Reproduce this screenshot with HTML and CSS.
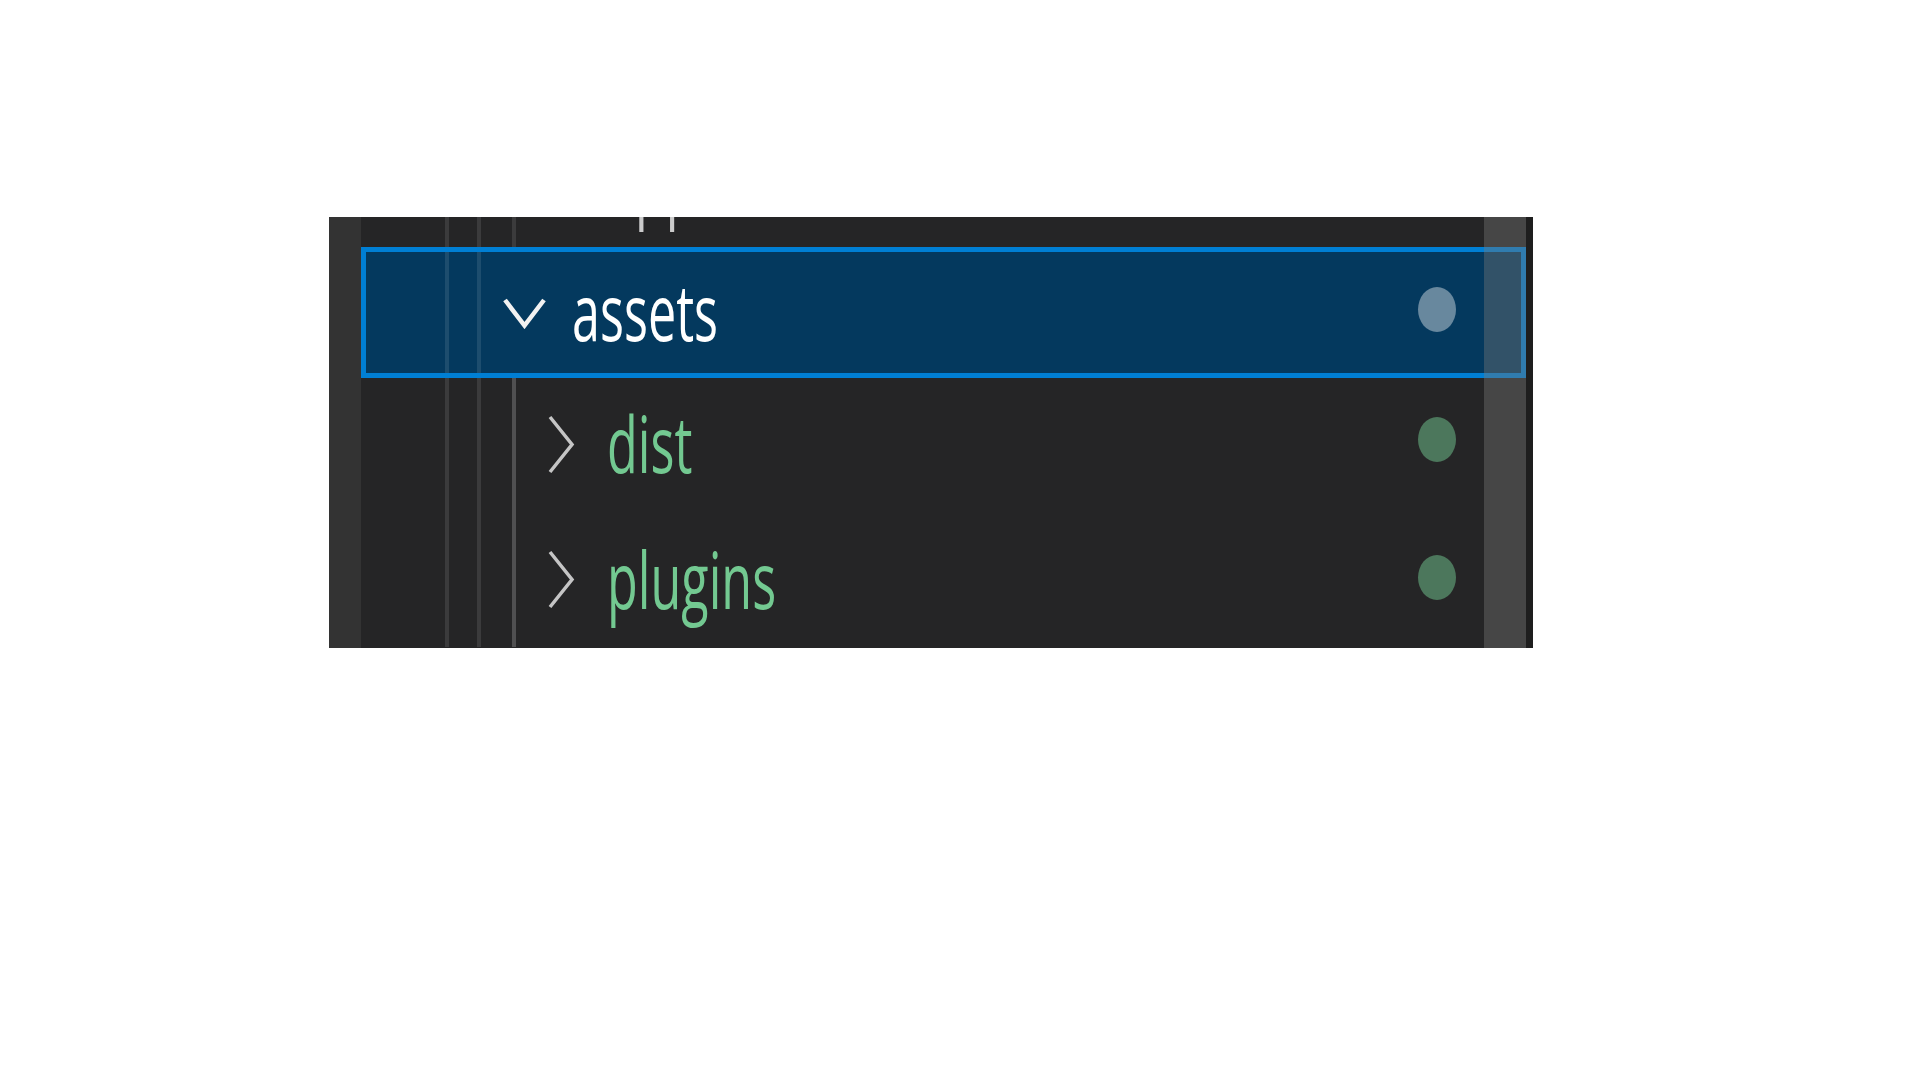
FILE: index.html
```html
<!DOCTYPE html>
<html lang="en">
<head>
<meta charset="utf-8">
<title>Explorer</title>
<link rel="stylesheet" href="styles.css">
</head>
<body>
<div class="panel">
  <div class="left-strip"></div>
  <div class="tree">
    <div class="list">
      <div class="row row-top">
        <span class="g g1"></span><span class="g g2"></span><span class="g g3"></span>
        <span class="twistie"></span>
        <span class="label label-plain">app</span>
      </div>
      <div class="row row-selected">
        <span class="g g1"></span><span class="g g2"></span>
        <span class="twistie">
          <svg width="45" height="32" viewBox="0 0 45 32"><polyline points="3,3 22.5,28.5 42,3" fill="none" stroke="#f2f2f2" stroke-width="4.5" stroke-linejoin="miter"/></svg>
        </span>
        <span class="label label-selected">assets</span>
        <span class="dot dot-selected"></span>
      </div>
      <div class="row row-dist">
        <span class="g g1"></span><span class="g g2"></span><span class="g g3 g-active"></span>
        <span class="twistie">
          <svg width="28" height="61" viewBox="0 0 28 61"><polyline points="3,3 25,30.5 3,58" fill="none" stroke="#c5c5c5" stroke-width="3.5"/></svg>
        </span>
        <span class="label label-green">dist</span>
        <span class="dot dot-green"></span>
      </div>
      <div class="row row-plugins">
        <span class="g g1"></span><span class="g g2"></span><span class="g g3 g-active"></span>
        <span class="twistie">
          <svg width="28" height="61" viewBox="0 0 28 61"><polyline points="3,3 25,30.5 3,58" fill="none" stroke="#c5c5c5" stroke-width="3.5"/></svg>
        </span>
        <span class="label label-green">plugins</span>
        <span class="dot dot-green"></span>
      </div>
    </div>
    <div class="scrollbar"></div>
  </div>
  <div class="right-strip"></div>
</div>
</body>
</html>
```

FILE: styles.css
```css
html, body {
  margin: 0;
  padding: 0;
  background: #ffffff;
}

.panel {
  margin: 217px 0 0 329px;
  width: 1204px;
  height: 431px;
  display: flex;
  background: #252526;
}

.left-strip {
  width: 32px;
  flex: 0 0 32px;
  background: #333333;
}

.right-strip {
  width: 7px;
  flex: 0 0 7px;
  background: #1e1e1e;
}

.tree {
  flex: 1 1 auto;
  position: relative;
  overflow: hidden;
  background: #252526;
}

.list {
  margin-top: -101px;
  display: flex;
  flex-direction: column;
}

.row {
  display: flex;
  align-items: stretch;
  height: 131px;
  flex: 0 0 auto;
}

.row-selected {
  height: 131px;
  background: #04395e;
  outline: 5px solid #007fd4;
  outline-offset: -5px;
}

.row-dist {
  height: 133px;
}

.row-plugins {
  height: 136px;
}

.g {
  flex: 0 0 auto;
  box-sizing: border-box;
  border-right: 4px solid rgba(255, 255, 255, 0.1);
}

.g1 { width: 88px; }
.g2 { width: 32px; }
.g3 { width: 35px; }

.g-active {
  border-right-color: rgba(255, 255, 255, 0.2);
}

.twistie {
  flex: 0 0 86px;
  width: 86px;
  display: flex;
  align-items: center;
  justify-content: center;
}

.row-dist .twistie svg,
.row-plugins .twistie svg {
  margin-left: 4px;
}

.label {
  margin-left: 5px;
  font-family: "Open Sans", "Noto Sans", sans-serif;
  font-size: 78px;
  line-height: 1;
  display: inline-block;
  align-self: center;
  transform: scaleX(0.645);
  transform-origin: left center;
  white-space: nowrap;
  position: relative;
  top: -2px;
}

.label-plain {
  color: #cccccc;
}

.row-top .label {
  top: 1px;
}

.label-selected {
  color: #ffffff;
}

.label-green {
  color: #73c991;
}

.row-plugins .label {
  top: 0;
}

.dot {
  margin-left: auto;
  margin-right: 70px;
  width: 38px;
  height: 45px;
  border-radius: 50%;
  align-self: center;
  flex: 0 0 auto;
  position: relative;
  top: -3px;
}

.dot-selected {
  background: rgba(255, 255, 255, 0.4);
}

.dot-green {
  background: rgba(115, 201, 145, 0.5);
  top: -5px;
}

.row-plugins .dot-green {
  top: -2px;
}

.scrollbar {
  position: absolute;
  top: 0;
  right: 0;
  width: 42px;
  height: 100%;
  background: rgba(121, 121, 121, 0.4);
}
```
